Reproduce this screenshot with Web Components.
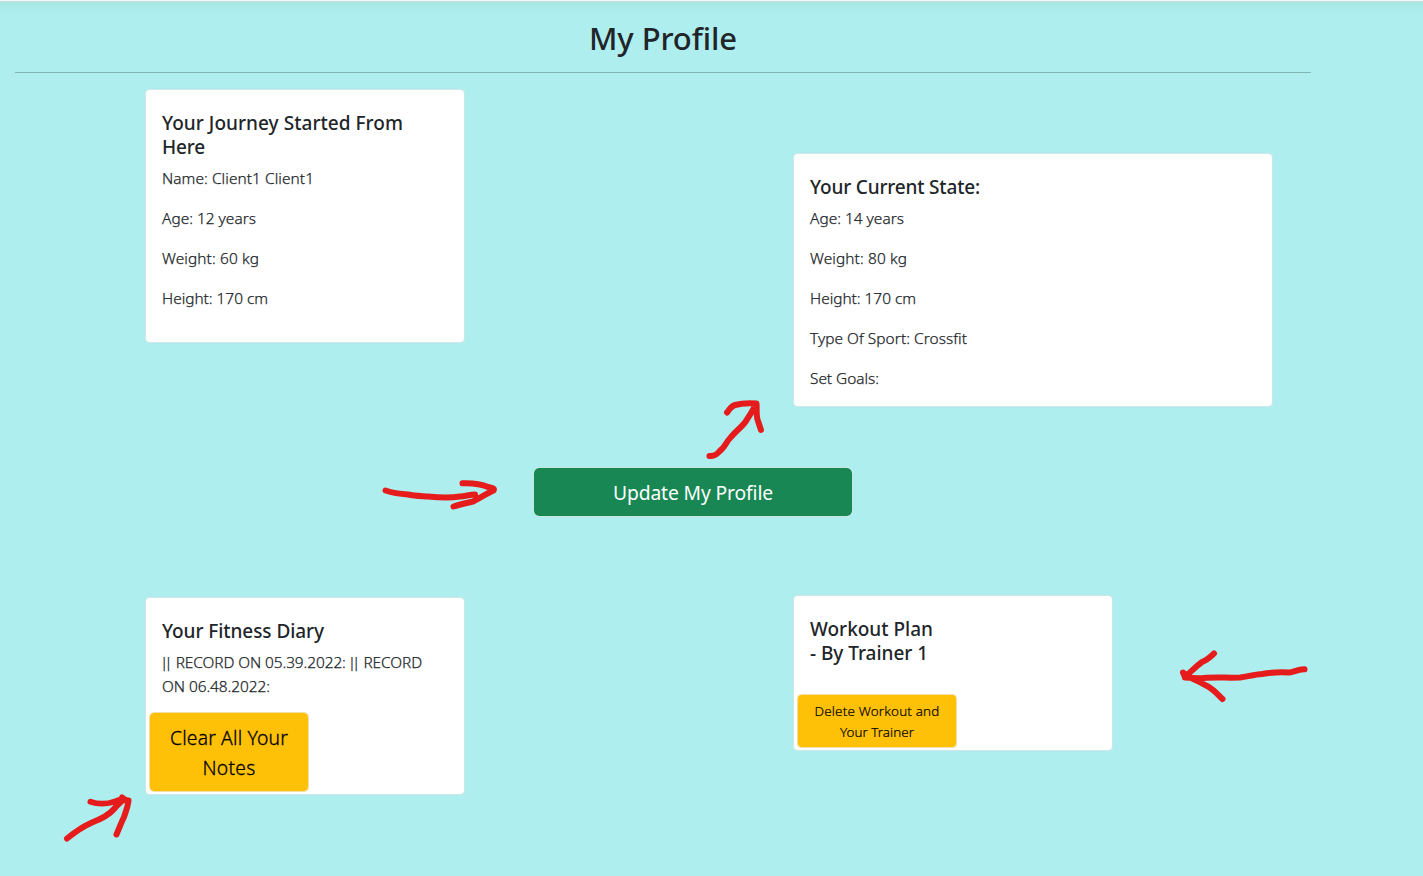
<!DOCTYPE html>
<html lang="en">
<head>
<meta charset="utf-8">
<title>My Profile</title>
<style>
html,body{margin:0;height:100%}
body{background:#afeeee;color:#212529;font-family:"Noto Sans","Open Sans",sans-serif;overflow:hidden}
</style>
</head>
<body>
<profile-page></profile-page>
<script>
// A single line of text whose tracking is adjusted to an intended width.
class TextLine extends HTMLElement {
  constructor(){
    super();
    this.attachShadow({mode:'open'}).innerHTML='<style>:host{display:block;white-space:nowrap}span{display:inline-block;line-height:inherit;vertical-align:top}</style><span><slot></slot></span>';
  }
  connectedCallback(){
    requestAnimationFrame(()=>this.fit());
    this.fit();
  }
  fit(){
    const s=this.shadowRoot.querySelector('span'), n=this.textContent.replace(/\|/g,'').length, w=+this.getAttribute('w');
    if(!w||!n) return;
    s.style.letterSpacing='0px';
    const now=s.getBoundingClientRect().width;
    if(!now) return;
    const gap=(w-now)/n;
    s.style.letterSpacing=gap+'px';
  }
}

class ProfileCard extends HTMLElement {
  constructor(){
    super();
    this.attachShadow({mode:'open'}).innerHTML=`<style>
:host{display:block;box-sizing:border-box;width:320px;background:#fff;background-clip:padding-box;border:1px solid #cfe6e6;border-radius:4px;padding:21px 0 0 16px}
.title{font-size:19px;font-weight:500;line-height:24px;margin-bottom:8px}
.text{display:flex;flex-direction:column;gap:16px;font-size:15.4px;font-weight:300;-webkit-text-stroke:.25px currentColor;line-height:24px}
:host([compact]) .text{gap:0}
.action{display:flex;margin-left:-13px}
</style><div class="title"><slot name="title"></slot></div><div class="text"><slot></slot></div><div class="action"><slot name="action"></slot></div>`;
  }
}

class ActionButton extends HTMLElement {
  constructor(){
    super();
    this.attachShadow({mode:'open'}).innerHTML=`<style>
:host{display:block;width:160px}
button{display:flex;flex-direction:column;align-items:center;justify-content:center;box-sizing:border-box;width:100%;height:var(--h,80px);margin:0;padding:1px 0 0;font:inherit;font-size:19.3px;font-weight:300;-webkit-text-stroke:.3px currentColor;line-height:30px;color:#000;background:#ffc107;background-clip:padding-box;border:1px solid #f5dfa8;border-radius:5px}
:host([kind=success]) button{background:#198754;background-clip:padding-box;color:#fff;border-color:#c4e9e1;border-radius:6px;font-weight:400;-webkit-text-stroke-width:0}
:host([small]) button{font-size:13.4px;-webkit-text-stroke-width:.2px;line-height:21px;border-radius:4px}
</style><button type="button"><slot></slot></button>`;
  }
}

class SketchArrows extends HTMLElement {
  constructor(){
    super();
    this.attachShadow({mode:'open'}).innerHTML=`<style>:host{display:block;position:absolute;inset:0;pointer-events:none}svg{display:block}</style>
<svg width="1423" height="876" viewBox="0 0 1423 876" fill="none" stroke="#e61c1c" stroke-width="6" stroke-linecap="round" stroke-linejoin="round">
<path d="M385.500 490.500C393 493 400 494 408 494.500C414 496 420 496 428 496.500C439 497.500 450 498 460 496.500C466 496 470 494.500 475 494.500M462.500 483.300C471 483 480 483.500 488 487C492 488 495 488 493.500 490.500C486 494 480 498 473 501.500C467 503 460 504.500 453.500 506.500"/>
<path d="M709.500 456C717 456.500 718 452 722 449C725 446 727 441 731 437C737 430 742 427 746 421C750 415 753 410 756 404M727 412.500C730 409 731 406 735 405C742 403 749 403 756.500 403.500C757 410 756 417 758 421C759 424 760 427 761 430"/>
<path d="M1304.500 669.300C1298 669 1294 672 1289 672.500C1279 672 1270 672.500 1262 674C1254 674.500 1248 676.500 1240 677.500C1228 678 1215 677 1204 678C1198 678.500 1191 678 1185 677.500M1214 653.500C1209 658 1207 660 1202 662C1195 667 1192 671 1185 677L1183 672.500C1190 679 1197 680 1205 685C1214 689 1217 694 1222.500 699"/>
<path d="M67 838.500C75 832 84 826 92 822.500C101 819 109 815 114 809C118 804 121 802 124 799M90.500 801.800C98 804.500 108 804 115 801.500C119 800 121 799 128.500 800.500C128 806 126 811 124 817C121 823 119 829 116.500 834.500M122 797.500L127.500 801.500"/>
</svg>`;
  }
}

class ProfilePage extends HTMLElement {
  constructor(){
    super();
    this.attachShadow({mode:'open'}).innerHTML=`<style>
:host{display:block;position:relative;box-sizing:border-box;width:1423px;height:876px;padding:2px 112px 0 15px;background:linear-gradient(#f1f7f7 0 1px,#c4dfde 1px 2px,#a6e5e4 2px,#aaeae9 8px,#afeeee 16px)}
h1{margin:0;height:70px;display:flex;justify-content:center;font-size:31px;line-height:38px;font-weight:500;padding-top:17px;box-sizing:border-box}
hr{margin:0;border:0;height:1px;background:#83b3b3}
.grid{display:grid;grid-template-columns:648px 648px;align-items:start;padding-top:16px;padding-left:130px}
.journey{height:254px}.current{height:254px;width:480px;margin-top:64px}
.center{display:flex;justify-content:center;padding:60px 0 78px 60px}
.update{width:320px}
.diary{height:198px;margin-top:2px}.plan{height:156px}
.grid.lower{padding-top:0}
.bars{letter-spacing:-4px;margin-left:-2px;margin-right:3px}
</style>
<h1><text-line w="148">My Profile</text-line></h1><hr>
<div class="grid">
<profile-card class="journey"><text-line slot="title" w="241">Your Journey Started From</text-line><text-line slot="title" w="43">Here</text-line>
<text-line w="152">Name: Client1 Client1</text-line><text-line w="94">Age: 12 years</text-line><text-line w="97">Weight: 60 kg</text-line><text-line w="106">Height: 170 cm</text-line></profile-card>
<profile-card class="current"><text-line slot="title" w="170">Your Current State:</text-line>
<text-line w="94">Age: 14 years</text-line><text-line w="97">Weight: 80 kg</text-line><text-line w="106">Height: 170 cm</text-line><text-line w="157">Type Of Sport: Crossfit</text-line><text-line w="69">Set Goals:</text-line></profile-card>
</div>
<div class="center"><action-button class="update" kind="success" style="--h:50px"><text-line w="160">Update My Profile</text-line></action-button></div>
<div class="grid lower">
<profile-card class="diary" compact><text-line slot="title" w="162">Your Fitness Diary</text-line>
<text-line w="260"><span class="bars">||</span> RECORD ON 05.39.2022: <span class="bars">||</span> RECORD</text-line><text-line w="108">ON 06.48.2022:</text-line>
<action-button slot="action" style="margin-top:13px"><text-line w="118">Clear All Your</text-line><text-line w="53">Notes</text-line></action-button></profile-card>
<profile-card class="plan" compact><text-line slot="title" w="123">Workout Plan</text-line><text-line slot="title" w="118">- By Trainer 1</text-line>
<action-button slot="action" small style="--h:54px;margin-top:21px"><text-line w="125">Delete Workout and</text-line><text-line w="74">Your Trainer</text-line></action-button></profile-card>
</div>
<sketch-arrows></sketch-arrows>`;
  }
}
customElements.define('profile-card',ProfileCard);
customElements.define('action-button',ActionButton);
customElements.define('sketch-arrows',SketchArrows);
customElements.define('profile-page',ProfilePage);
customElements.define('text-line',TextLine);
document.querySelector('profile-page').shadowRoot.querySelectorAll('text-line').forEach(t=>t.fit());
</script>
</body>
</html>
